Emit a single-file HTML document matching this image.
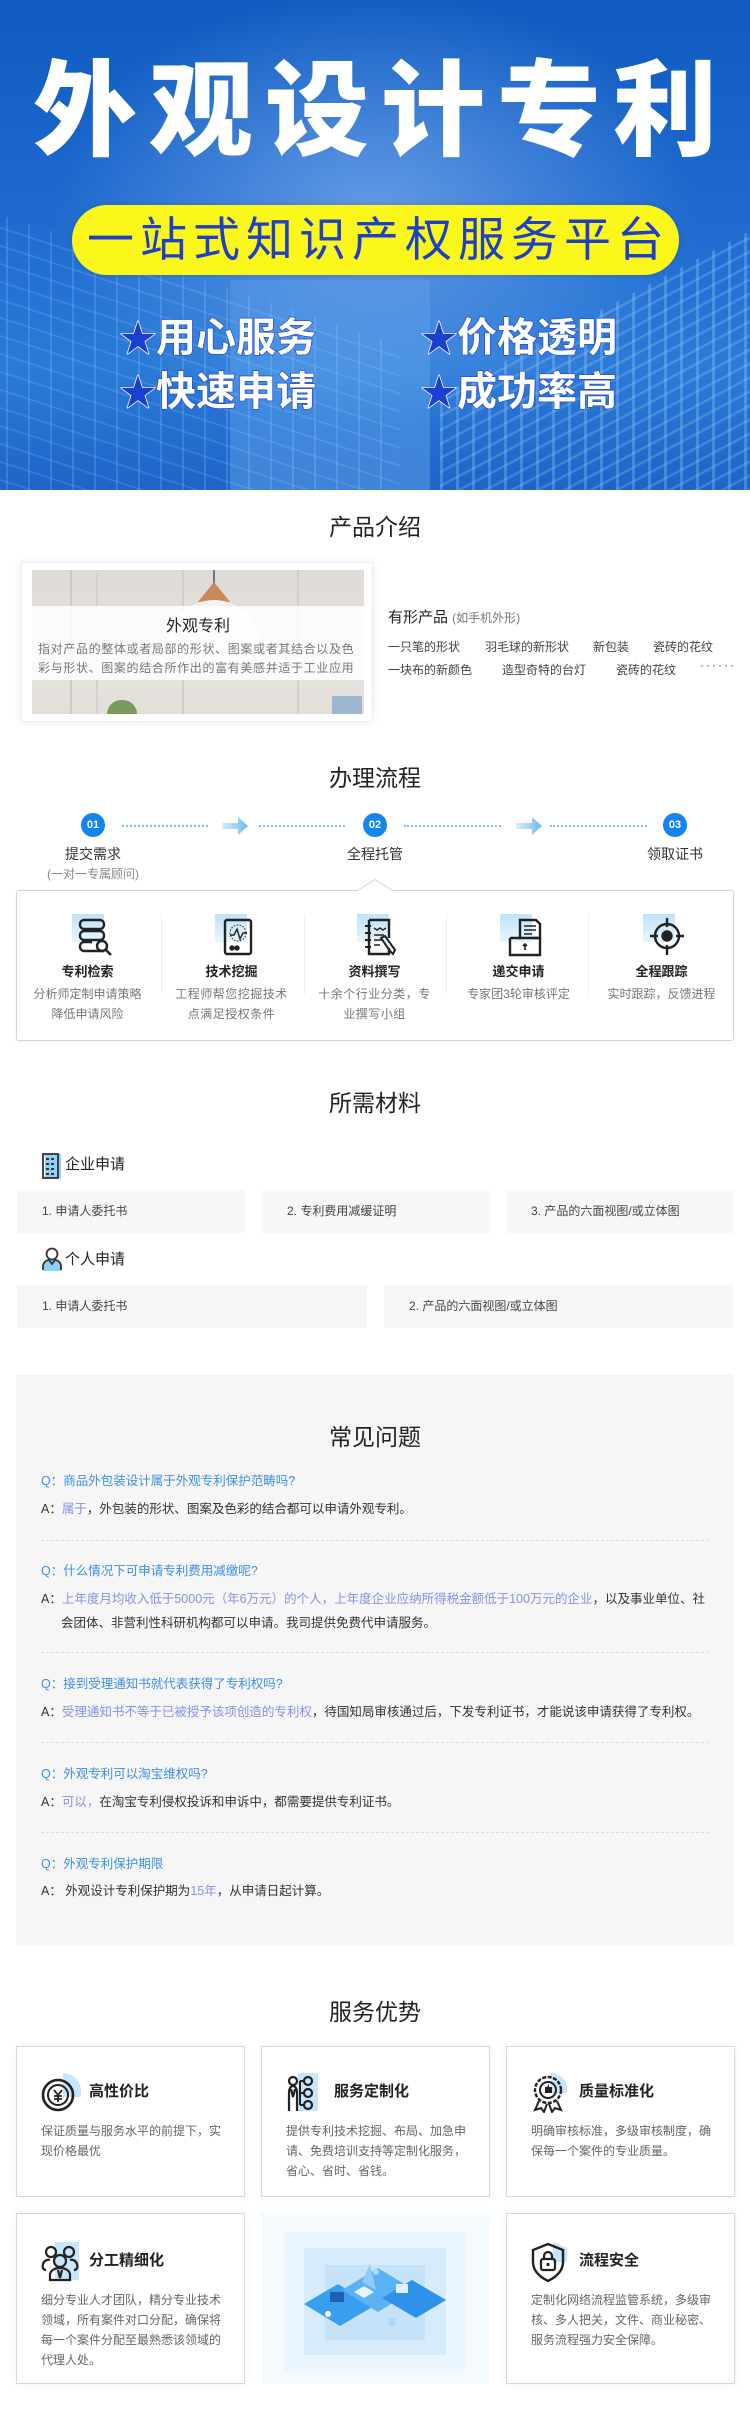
<!DOCTYPE html>
<html><head><meta charset="utf-8">
<style>
*{margin:0;padding:0;box-sizing:border-box}
body{width:750px;height:2429px;position:relative;background:#fff;font-family:"Liberation Sans","Noto Sans CJK SC",sans-serif;color:#333;overflow:hidden}
.a{position:absolute;white-space:nowrap}
.hero{position:absolute;left:0;top:0;width:750px;height:490px;overflow:hidden;
background:radial-gradient(ellipse 320px 220px at 375px 210px,rgba(120,170,235,.75),rgba(60,120,215,0) 100%),linear-gradient(180deg,#0f5bc0 0%,#1f6ad0 45%,#2a7bd8 75%,#1e64c8 100%)}
.grid1{position:absolute;left:-60px;top:270px;width:460px;height:320px;transform:skewY(18deg);
background:repeating-linear-gradient(90deg,rgba(160,210,255,.25) 0 2px,transparent 2px 22px),repeating-linear-gradient(0deg,rgba(160,210,255,.22) 0 2px,transparent 2px 18px);opacity:.8}
.grid2{position:absolute;left:440px;top:300px;width:360px;height:260px;transform:skewY(-28deg);
background:repeating-linear-gradient(90deg,rgba(190,225,255,.35) 0 3px,transparent 3px 16px),repeating-linear-gradient(0deg,rgba(190,225,255,.3) 0 3px,transparent 3px 14px);opacity:.7}
.grid3{position:absolute;left:230px;top:280px;width:200px;height:260px;background:linear-gradient(180deg,rgba(140,200,255,.15),rgba(140,200,255,.35));}
.title{left:0;width:750px;top:52px;text-align:center;font-size:104px;line-height:120px;font-weight:900;color:#fff;letter-spacing:12px;padding-left:12px}
.pill{left:72px;top:205px;width:607px;height:70px;border-radius:35px;background:#fbf71a;box-shadow:0 0 6px rgba(0,0,0,.15)}
.pilltxt{left:72px;width:607px;top:205px;line-height:70px;text-align:center;font-size:47px;color:#1f3fc4;letter-spacing:6px;padding-left:6px}
.feat{font-size:40px;font-weight:700;line-height:44px;color:#fff;-webkit-text-stroke:1.5px #2a4fcf;paint-order:stroke fill;letter-spacing:0}
.feat b{color:#1b3fd0;-webkit-text-stroke:1.5px #fff;font-size:36px}
.h2{left:0;width:750px;text-align:center;font-size:23px;color:#222;line-height:30px}
.sm{font-size:12px;color:#444}
.gray{color:#777}
.dot{position:absolute;height:0;border-top:2px dotted #7fc3f3}
.circ{position:absolute;width:24px;height:24px;border-radius:50%;background:#1485ee;color:#fff;font-size:11px;font-weight:700;line-height:24px;text-align:center}
.arr{position:absolute;width:26px;height:18px}
.col{position:absolute;top:914px;width:143px;text-align:center}
.ic{position:absolute;width:40px;height:42px}
.ic .bg{position:absolute;left:0;top:0;width:32px;height:28px;background:linear-gradient(180deg,#bfe2fb,#e8f5fe)}
.mb{position:absolute;background:#f7f7f7;height:43px;font-size:12px;color:#444;line-height:43px;padding-left:25px}
.faq{position:absolute;left:16px;top:1374px;width:718px;height:571px;background:#f6f6f6}
.q{position:absolute;left:41px;font-size:12.5px;color:#3d8fe6;line-height:18px;white-space:nowrap}
.an{position:absolute;left:41px;font-size:12.5px;color:#333;line-height:18px;white-space:nowrap}
.hl{color:#8a90e8}
.dv{position:absolute;left:41px;width:668px;border-top:1px dashed #ddd}
.card{position:absolute;width:229px;background:#fff;border:1px solid #d8d8d8;box-shadow:0 0 8px rgba(0,0,0,.06)}
.ct{position:absolute;left:72px;font-size:15px;font-weight:700;color:#222;line-height:20px;white-space:nowrap}
.cd{position:absolute;left:24px;width:190px;font-size:12px;color:#666;line-height:20px}
.sic{position:absolute;left:24px;width:42px;height:40px}
</style></head><body>

<div class="hero">
  <div class="grid3"></div>
  <div class="grid1"></div>
  <div class="grid2"></div>
</div>
<div class="a title">外观设计专利</div>
<div class="a pill"></div>
<div class="a pilltxt">一站式知识产权服务平台</div>
<div class="a feat" style="left:120px;top:316px"><b>★</b>用心服务</div>
<div class="a feat" style="left:421px;top:316px"><b>★</b>价格透明</div>
<div class="a feat" style="left:120px;top:370px"><b>★</b>快速申请</div>
<div class="a feat" style="left:421px;top:370px"><b>★</b>成功率高</div>

<!-- 产品介绍 -->
<div class="a h2" style="top:512px">产品介绍</div>
<div class="a" style="left:21px;top:562px;width:352px;height:160px;border:1px solid #eee;box-shadow:0 0 8px rgba(0,0,0,.08);background:#fff"></div>
<div class="a" style="left:32px;top:570px;width:332px;height:144px;overflow:hidden;background:linear-gradient(180deg,#dedad5,#e9e6e2 60%,#e2ded9)">
  <div class="a" style="left:38px;top:0;width:2px;height:144px;background:#cfcac4"></div>
  <div class="a" style="left:64px;top:0;width:2px;height:144px;background:#d6d1cb"></div>
  <div class="a" style="left:150px;top:0;width:2px;height:144px;background:#d3cec8"></div>
  <div class="a" style="left:265px;top:0;width:2px;height:144px;background:#d3cec8"></div>
  <div class="a" style="left:181px;top:0;width:2px;height:14px;background:#777"></div>
  <div class="a" style="left:166px;top:12px;width:0;height:0;border-left:16px solid transparent;border-right:16px solid transparent;border-bottom:20px solid #c88a5b"></div>
  <div class="a" style="left:136px;top:30px;width:92px;height:60px;border-radius:46px 46px 10px 10px;background:#f4f3f1"></div>
  <div class="a" style="left:0;top:36px;width:332px;height:74px;background:rgba(255,255,255,.86)"></div>
  <div class="a" style="left:300px;top:126px;width:30px;height:18px;background:#9eb7cf"></div>
  <div class="a" style="left:75px;top:130px;width:30px;height:14px;border-radius:14px 14px 0 0;background:#7c9a5e"></div>
</div>
<div class="a" style="left:32px;top:612px;width:332px;text-align:center;font-size:16px;color:#222">外观专利</div>
<div class="a gray" style="left:38px;top:641px;font-size:12px;letter-spacing:.65px;line-height:17px">指对产品的整体或者局部的形状、图案或者其结合以及色</div>
<div class="a gray" style="left:38px;top:660px;font-size:12px;letter-spacing:.65px;line-height:17px">彩与形状、图案的结合所作出的富有美感并适于工业应用</div>
<div class="a" style="left:388px;top:608px;font-size:15px;color:#222;line-height:20px">有形产品 <span style="font-size:12px;color:#777">(如手机外形)</span></div>
<div class="a sm" style="left:388px;top:638px">一只笔的形状</div>
<div class="a sm" style="left:485px;top:638px">羽毛球的新形状</div>
<div class="a sm" style="left:593px;top:638px">新包装</div>
<div class="a sm" style="left:653px;top:638px">瓷砖的花纹</div>
<div class="a sm" style="left:388px;top:661px">一块布的新颜色</div>
<div class="a sm" style="left:502px;top:661px">造型奇特的台灯</div>
<div class="a sm" style="left:616px;top:661px">瓷砖的花纹</div>
<div class="a sm" style="left:700px;top:658px;letter-spacing:2px">······</div>

<!-- 办理流程 -->
<div class="a h2" style="top:763px">办理流程</div>
<div class="circ" style="left:81px;top:813px">01</div>
<div class="circ" style="left:363px;top:813px">02</div>
<div class="circ" style="left:663px;top:813px">03</div>
<div class="dot" style="left:122px;top:825px;width:86px"></div>
<div class="dot" style="left:259px;top:825px;width:86px"></div>
<div class="dot" style="left:404px;top:825px;width:97px"></div>
<div class="dot" style="left:550px;top:825px;width:97px"></div>
<svg class="arr" style="left:222px;top:817px" viewBox="0 0 26 18"><defs><linearGradient id="ga" x1="0" x2="1"><stop offset="0" stop-color="#d6eefc"/><stop offset="1" stop-color="#6cbcf2"/></linearGradient></defs><path d="M0 6h16V0l10 9-10 9v-6H0z" fill="url(#ga)"/></svg>
<svg class="arr" style="left:516px;top:817px" viewBox="0 0 26 18"><path d="M0 6h16V0l10 9-10 9v-6H0z" fill="url(#ga)"/></svg>
<div class="a" style="left:53px;top:844px;width:80px;text-align:center;font-size:14px;color:#333">提交需求</div>
<div class="a" style="left:335px;top:844px;width:80px;text-align:center;font-size:14px;color:#333">全程托管</div>
<div class="a" style="left:635px;top:844px;width:80px;text-align:center;font-size:14px;color:#333">领取证书</div>
<div class="a" style="left:33px;top:865px;width:120px;text-align:center;font-size:12px;color:#888">(一对一专属顾问)</div>

<div class="a" style="left:16px;top:890px;width:718px;height:151px;border:1px solid #c6d8e6;border-radius:3px;background:#fff;box-shadow:0 1px 4px rgba(0,0,0,.05)"></div>
<svg class="a" style="left:356px;top:879px" width="38" height="13" viewBox="0 0 38 13"><path d="M0 12.5 L19 0.5 L38 12.5" fill="#fff" stroke="#c6d8e6"/><rect x="1" y="12" width="36" height="2" fill="#fff"/></svg>
<div class="a" style="left:161px;top:914px;width:1px;height:80px;background:#eee"></div>
<div class="a" style="left:304px;top:914px;width:1px;height:80px;background:#eee"></div>
<div class="a" style="left:446px;top:914px;width:1px;height:80px;background:#eee"></div>
<div class="a" style="left:588px;top:914px;width:1px;height:80px;background:#eee"></div>

<!-- icons -->
<div class="ic" style="left:72px;top:914px"><div class="bg"></div><svg class="a" style="left:6px;top:4px" width="36" height="38" viewBox="0 0 36 38" fill="none" stroke="#222" stroke-width="2.4"><rect x="2" y="2" width="24" height="9" rx="4"/><rect x="2" y="13" width="24" height="9" rx="4"/><path d="M26 33H6a4 4 0 0 1-4-4v-1a4 4 0 0 1 4-4h8"/><circle cx="24" cy="28" r="5"/><path d="M28 32l5 5"/></svg></div>
<div class="ic" style="left:215px;top:914px"><div class="bg"></div><svg class="a" style="left:8px;top:4px" width="32" height="38" viewBox="0 0 32 38" fill="none" stroke="#222" stroke-width="2.4"><rect x="2" y="2" width="26" height="34" rx="2"/><path d="M7 17l4 0 3-6 3 10 3-6 4 0" stroke-width="1.4"/><circle cx="15" cy="15" r="8" stroke-width="1" stroke-dasharray="1.5 1.5"/><circle cx="9" cy="30" r="1.5" fill="#222"/><circle cx="14" cy="30" r="1.5" fill="#222"/></svg></div>
<div class="ic" style="left:357px;top:914px"><div class="bg"></div><svg class="a" style="left:6px;top:4px" width="36" height="40" viewBox="0 0 36 40" fill="none" stroke="#222" stroke-width="2.4"><path d="M6 2h20v18M26 30v6H6V2"/><path d="M2 8h6M2 15h6M2 22h6M2 29h6" stroke-width="2"/><path d="M11 10l3 2 3-2 3 2 3-2" stroke-width="1.4"/><path d="M11 17h10M11 22h8M11 27h6" stroke-width="1.4"/><path d="M22 18l10 14-2 4-3-3-9-13z" stroke-width="2"/></svg></div>
<div class="ic" style="left:500px;top:914px"><div class="bg"></div><svg class="a" style="left:8px;top:4px" width="34" height="40" viewBox="0 0 34 40" fill="none" stroke="#222" stroke-width="2.4"><path d="M12 2h16l4 4v14H12z"/><path d="M16 8h12M16 12h12M16 16h8" stroke-width="1.6"/><path d="M2 20h10v-2M2 20v17h30V20H24"/><path d="M17 32v-6M15 28l2-2 2 2" stroke-width="1.6"/></svg></div>
<div class="ic" style="left:643px;top:914px"><div class="bg"></div><svg class="a" style="left:6px;top:2px" width="36" height="40" viewBox="0 0 36 40" fill="none" stroke="#222" stroke-width="2.4"><circle cx="18" cy="20" r="12"/><circle cx="18" cy="20" r="4.5" fill="#222"/><path d="M18 2v9M18 29v10M1 20h8M27 20h8"/></svg></div>

<div class="col" style="left:16px;top:961px;font-size:13px;font-weight:700;color:#222">专利检索</div>
<div class="col" style="left:160px;top:961px;font-size:13px;font-weight:700;color:#222">技术挖掘</div>
<div class="col" style="left:303px;top:961px;font-size:13px;font-weight:700;color:#222">资料撰写</div>
<div class="col" style="left:447px;top:961px;font-size:13px;font-weight:700;color:#222">递交申请</div>
<div class="col" style="left:590px;top:961px;font-size:13px;font-weight:700;color:#222">全程跟踪</div>
<div class="col gray" style="left:16px;top:984px;font-size:12px;line-height:20px">分析师定制申请策略<br>降低申请风险</div>
<div class="col gray" style="left:160px;top:984px;font-size:12px;line-height:20px;letter-spacing:.5px">工程师帮您挖掘技术<br>点满足授权条件</div>
<div class="col gray" style="left:303px;top:984px;font-size:12px;line-height:20px;letter-spacing:.5px">十余个行业分类，专<br>业撰写小组</div>
<div class="col gray" style="left:447px;top:984px;font-size:12px;line-height:20px">专家团3轮审核评定</div>
<div class="col gray" style="left:590px;top:984px;font-size:12px;line-height:20px">实时跟踪，反馈进程</div>

<!-- 所需材料 -->
<div class="a h2" style="top:1088px">所需材料</div>
<svg class="a" style="left:42px;top:1153px" width="20" height="26" viewBox="0 0 20 26"><rect x="3" y="1" width="16" height="24" fill="#8fd0fb"/><rect x="1" y="1" width="15" height="24" fill="none" stroke="#333" stroke-width="1.8"/><g fill="#333"><rect x="4" y="5" width="3" height="2"/><rect x="9" y="5" width="3" height="2"/><rect x="4" y="10" width="3" height="2"/><rect x="9" y="10" width="3" height="2"/><rect x="4" y="15" width="3" height="2"/><rect x="9" y="15" width="3" height="2"/><rect x="4" y="20" width="3" height="2"/><rect x="9" y="20" width="3" height="2"/></g></svg>
<div class="a" style="left:65px;top:1155px;font-size:15px;color:#222;line-height:20px">企业申请</div>
<div class="mb a" style="left:17px;top:1190px;width:228px">1. 申请人委托书</div>
<div class="mb a" style="left:262px;top:1190px;width:228px">2. 专利费用减缓证明</div>
<div class="mb a" style="left:506px;top:1190px;width:228px">3. 产品的六面视图/或立体图</div>
<svg class="a" style="left:42px;top:1247px" width="20" height="24" viewBox="0 0 20 24"><path d="M2 24v-5c0-4 4-6 8-6s9 2 9 6v5z" fill="#8fd0fb"/><circle cx="10" cy="7" r="5.5" fill="none" stroke="#333" stroke-width="1.8"/><path d="M1 23v-4c0-3 3-6 6-6M19 23v-4c0-3-3-6-6-6M7 13l3 4 3-4" fill="none" stroke="#333" stroke-width="1.8"/></svg>
<div class="a" style="left:65px;top:1250px;font-size:15px;color:#222;line-height:20px">个人申请</div>
<div class="mb a" style="left:17px;top:1285px;width:350px">1. 申请人委托书</div>
<div class="mb a" style="left:384px;top:1285px;width:350px">2. 产品的六面视图/或立体图</div>

<!-- FAQ -->
<div class="faq">
  <div class="a h2" style="left:0;width:718px;top:48px">常见问题</div>
  <div class="q" style="left:25px;top:98px">Q：商品外包装设计属于外观专利保护范畴吗?</div>
  <div class="an" style="left:25px;top:126px">A：<span class="hl">属于</span>，外包装的形状、图案及色彩的结合都可以申请外观专利。</div>
  <div class="dv" style="left:25px;top:166px"></div>
  <div class="q" style="left:25px;top:188px">Q：什么情况下可申请专利费用减缴呢?</div>
  <div class="an" style="left:25px;top:216px">A：<span class="hl">上年度月均收入低于5000元（年6万元）的个人，上年度企业应纳所得税金额低于100万元的企业</span>，以及事业单位、社</div>
  <div class="an" style="left:45px;top:240px">会团体、非营利性科研机构都可以申请。我司提供免费代申请服务。</div>
  <div class="dv" style="left:25px;top:278px"></div>
  <div class="q" style="left:25px;top:301px">Q：接到受理通知书就代表获得了专利权吗?</div>
  <div class="an" style="left:25px;top:329px">A：<span class="hl">受理通知书不等于已被授予该项创造的专利权</span>，待国知局审核通过后，下发专利证书，才能说该申请获得了专利权。</div>
  <div class="dv" style="left:25px;top:368px"></div>
  <div class="q" style="left:25px;top:391px">Q：外观专利可以淘宝维权吗?</div>
  <div class="an" style="left:25px;top:419px">A：<span class="hl">可以，</span>在淘宝专利侵权投诉和申诉中，都需要提供专利证书。</div>
  <div class="dv" style="left:25px;top:458px"></div>
  <div class="q" style="left:25px;top:481px">Q：外观专利保护期限</div>
  <div class="an" style="left:25px;top:508px">A： 外观设计专利保护期为<span class="hl">15年</span>，从申请日起计算。</div>
</div>

<!-- 服务优势 -->
<div class="a h2" style="top:1997px">服务优势</div>

<div class="card" style="left:16px;top:2046px;height:151px">
  <svg class="sic" style="top:26px" viewBox="0 0 42 40"><path d="M22 0a18 18 0 0 1 18 18v6H22z" fill="#c7e5fb"/><circle cx="17" cy="22" r="15" fill="none" stroke="#222" stroke-width="2.6"/><circle cx="17" cy="22" r="10" fill="none" stroke="#222" stroke-width="2"/><path d="M13 17l4 5 4-5M17 22v7M13 23h8M13 26h8" fill="none" stroke="#222" stroke-width="1.8"/></svg>
  <div class="ct" style="top:35px">高性价比</div>
  <div class="cd" style="top:74px">保证质量与服务水平的前提下，实现价格最优</div>
</div>
<div class="card" style="left:261px;top:2046px;height:151px">
  <svg class="sic" style="top:26px" viewBox="0 0 42 40"><rect x="12" y="0" width="20" height="38" fill="#c7e5fb"/><circle cx="7" cy="8" r="4" fill="none" stroke="#222" stroke-width="2.2"/><path d="M3 38V20c0-5 2-7 4-7s4 2 4 7v18M5 16l2 8 2-8" fill="none" stroke="#222" stroke-width="2.2"/><circle cx="22" cy="8" r="4" fill="none" stroke="#222" stroke-width="2.2"/><circle cx="22" cy="20" r="4" fill="none" stroke="#222" stroke-width="2.2"/><circle cx="22" cy="32" r="4" fill="none" stroke="#222" stroke-width="2.2"/><path d="M14 8v24M14 20h4M14 8h4M14 32h4" fill="none" stroke="#222" stroke-width="2"/></svg>
  <div class="ct" style="top:35px">服务定制化</div>
  <div class="cd" style="top:74px;width:185px">提供专利技术挖掘、布局、加急申请、免费培训支持等定制化服务，省心、省时、省钱。</div>
</div>
<div class="card" style="left:506px;top:2046px;height:151px">
  <svg class="sic" style="top:26px" viewBox="0 0 42 40"><path d="M20 0a16 16 0 0 1 16 16v4H20z" fill="#c7e5fb"/><circle cx="17" cy="17" r="13" fill="none" stroke="#222" stroke-width="2.4" stroke-dasharray="4 1.5"/><circle cx="17" cy="17" r="8" fill="none" stroke="#222" stroke-width="2"/><path d="M14 20v-6h2l2-3v3h3v6z" fill="#222"/><path d="M8 28l-4 9 6-2 3 4 3-8M26 28l4 9-6-2-3 4-3-8" fill="none" stroke="#222" stroke-width="2"/></svg>
  <div class="ct" style="top:35px">质量标准化</div>
  <div class="cd" style="top:74px">明确审核标准，多级审核制度，确保每一个案件的专业质量。</div>
</div>

<div class="card" style="left:16px;top:2213px;height:171px">
  <svg class="sic" style="top:28px" viewBox="0 0 42 40"><rect x="14" y="0" width="24" height="38" fill="#c7e5fb"/><circle cx="10" cy="10" r="5" fill="none" stroke="#222" stroke-width="2.2"/><circle cx="28" cy="10" r="5" fill="none" stroke="#222" stroke-width="2.2"/><circle cx="19" cy="19" r="6" fill="none" stroke="#222" stroke-width="2.2"/><path d="M5 28c-3 0-4-3-3-6s4-5 7-4M33 28c3 0 4-3 3-6s-4-5-7-4M9 38v-5c0-4 4-7 10-7s10 3 10 7v5zM17 28l2 8 2-8" fill="none" stroke="#222" stroke-width="2.2"/></svg>
  <div class="ct" style="top:37px">分工精细化</div>
  <div class="cd" style="top:76px">细分专业人才团队，精分专业技术领域，所有案件对口分配，确保将每一个案件分配至最熟悉该领域的代理人处。</div>
</div>
<div class="a" style="left:261px;top:2213px;width:229px;height:171px;background:#f5faff"></div>
<div class="a" style="left:284px;top:2232px;width:182px;height:139px;background:#eaf5fe"></div>
<div class="a" style="left:304px;top:2248px;width:142px;height:107px;background:#d6ebfb"></div>
<div class="a" style="left:325px;top:2265px;width:100px;height:75px;background:#c6e2f9"></div>
<svg class="a" style="left:302px;top:2262px" width="146" height="80" viewBox="0 0 146 80"><path d="M2 42l34-20 36 22-34 20z" fill="#3a9ef0"/><path d="M40 28l36-22 36 22-36 22z" fill="#5ab2f5"/><path d="M80 36l30-18 34 20-30 18z" fill="#2f92ea"/><path d="M60 20l8-18 6 26z" fill="#8ccdfa"/><path d="M52 30l10-6 10 6-10 6z" fill="#e7f4ff"/><rect x="28" y="30" width="14" height="10" fill="#1f5fb8"/><rect x="94" y="22" width="12" height="9" fill="#dff0ff"/><circle cx="26" cy="52" r="3" fill="#fff"/><circle cx="90" cy="60" r="4" fill="#aad8fb"/><circle cx="74" cy="10" r="3" fill="#aad8fb"/></svg>
<div class="card" style="left:506px;top:2213px;height:171px">
  <svg class="sic" style="top:28px" viewBox="0 0 42 40"><path d="M22 0l14 6v14H22z" fill="#c7e5fb"/><path d="M17 2l15 6v12c0 9-7 15-15 19C9 35 2 29 2 20V8z" fill="none" stroke="#222" stroke-width="2.4"/><rect x="10" y="17" width="14" height="11" rx="2" fill="none" stroke="#222" stroke-width="2.2"/><path d="M13 17v-3a4 4 0 0 1 8 0v3" fill="none" stroke="#222" stroke-width="2.2"/><circle cx="17" cy="22.5" r="1.6" fill="#222"/></svg>
  <div class="ct" style="top:37px">流程安全</div>
  <div class="cd" style="top:76px">定制化网络流程监管系统，多级审核、多人把关，文件、商业秘密、服务流程强力安全保障。</div>
</div>

</body></html>
